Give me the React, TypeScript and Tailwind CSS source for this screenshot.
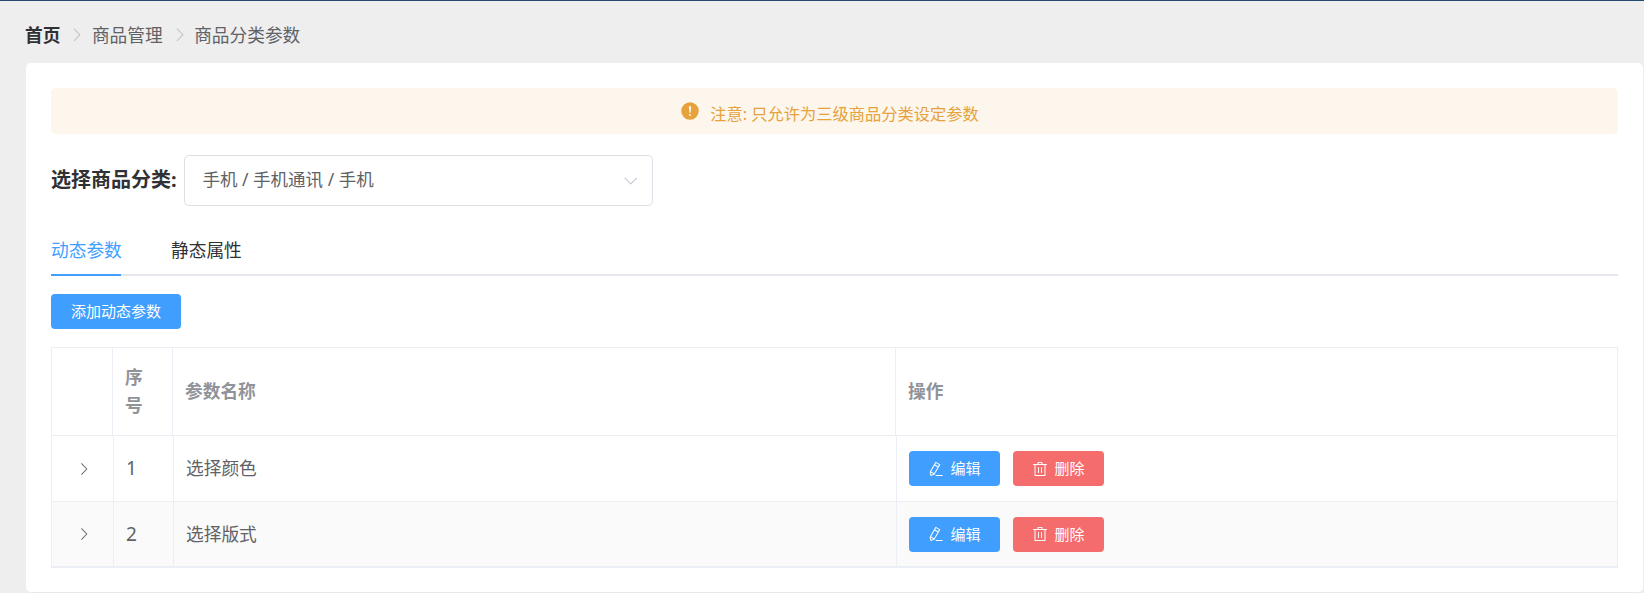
import React from 'react'

const font = { fontFamily: '"Noto Sans", "Noto Sans CJK SC", sans-serif' }

function ArrowRight({ className }: { className?: string }) {
  return (
    <svg viewBox="0 0 1024 1024" fill="currentColor" className={className}>
      <path d="M340.864 149.312a30.592 30.592 0 0 0 0 42.752L652.736 512 340.864 831.872a30.592 30.592 0 0 0 0 42.752 29.12 29.12 0 0 0 41.728 0L714.24 534.336a32 32 0 0 0 0-44.672L382.592 149.376a29.12 29.12 0 0 0-41.728 0z" />
    </svg>
  )
}

function ArrowDown({ className }: { className?: string }) {
  return (
    <svg viewBox="0 0 1024 1024" fill="currentColor" className={className}>
      <path d="M831.872 340.864 512 652.672 192.128 340.864a30.592 30.592 0 0 0-42.752 0 29.12 29.12 0 0 0 0 41.6L489.664 714.24a32 32 0 0 0 44.672 0l340.288-331.712a29.12 29.12 0 0 0 0-41.728 30.592 30.592 0 0 0-42.752 0z" />
    </svg>
  )
}

function WarningFilled({ className }: { className?: string }) {
  return (
    <svg viewBox="0 0 1024 1024" fill="currentColor" className={className}>
      <path d="M512 64a448 448 0 1 1 0 896 448 448 0 0 1 0-896zm0 192a58.432 58.432 0 0 0-58.24 63.744l23.36 256.384a35.072 35.072 0 0 0 69.76 0l23.296-256.384A58.432 58.432 0 0 0 512 256zm0 512a51.2 51.2 0 1 0 0-102.4 51.2 51.2 0 0 0 0 102.4z" />
    </svg>
  )
}

function EditPen({ className }: { className?: string }) {
  return (
    <svg viewBox="0 0 1024 1024" fill="currentColor" className={className}>
      <path d="m199.04 672.64 193.984 112 224-387.968-193.92-112-224 388.032zm-23.872 60.16 32.896 148.288 144.896-45.696L175.168 732.8zM455.04 229.248l193.92 112 56.704-98.112-193.984-112-56.64 98.112zM104.32 708.8l384-665.024 304.768 175.936L409.152 884.8h.064l-248.448 78.336L104.32 708.8zm384 254.272v-64h448v64h-448z" />
    </svg>
  )
}

function TrashIcon({ className }: { className?: string }) {
  return (
    <svg viewBox="0 0 1024 1024" fill="currentColor" className={className}>
      <path d="M160 256H96a32 32 0 0 1 0-64h256V95.936a32 32 0 0 1 32-32h256a32 32 0 0 1 32 32V192h256a32 32 0 1 1 0 64h-64v672a32 32 0 0 1-32 32H192a32 32 0 0 1-32-32V256zm448-64v-64H416v64h192zM224 896h576V256H224v640zm192-128a32 32 0 0 1-32-32V416a32 32 0 0 1 64 0v320a32 32 0 0 1-32 32zm192 0a32 32 0 0 1-32-32V416a32 32 0 0 1 64 0v320a32 32 0 0 1-32 32z" />
    </svg>
  )
}

function Breadcrumb() {
  return (
    <div className="flex items-center h-[22px] mt-[23px] mb-[17px] ml-[25px] text-[17.7px] leading-[22px] text-[#606266]">
      <span className="font-bold text-[#303133]">首页</span>
      <ArrowRight className="w-[17.5px] h-[17.5px] ml-[8px] mr-[6px] text-[#c0c4cc]" />
      <span>商品管理</span>
      <ArrowRight className="w-[17.5px] h-[17.5px] ml-[8px] mr-[6px] text-[#c0c4cc]" />
      <span>商品分类参数</span>
    </div>
  )
}

function ParamRow({ index, name, striped, last }: { index: number; name: string; striped?: boolean; last?: boolean }) {
  return (
    <div
      className={`grid grid-cols-[62px_60px_723px_1fr] h-[66px] text-[17.7px] text-[#606266] border-[#ebeef5] ${
        striped ? 'bg-[#fafafa]' : 'bg-white'
      } ${last ? 'border-b-2' : 'border-b'}`}
    >
      <div className="flex items-center justify-center pl-[2px] border-r border-[#ebeef5]">
        <ArrowRight className="w-[16px] h-[16px] text-[#606266]" />
      </div>
      <div className="flex items-center pl-[12px] text-[19px] border-r border-[#ebeef5]">{index}</div>
      <div className="flex items-center pl-[12px] border-r border-[#ebeef5]">{name}</div>
      <div className="flex items-center pl-[12px] gap-[13px]">
        <button className="flex items-center justify-center gap-[6px] w-[91px] h-[35px] rounded-[4px] bg-[#409eff] text-white text-[15px]">
          <EditPen className="w-[16px] h-[16px]" />
          <span>编辑</span>
        </button>
        <button className="flex items-center justify-center gap-[6px] w-[91px] h-[35px] rounded-[4px] bg-[#f56c6c] text-white text-[15px]">
          <TrashIcon className="w-[16px] h-[16px]" />
          <span>删除</span>
        </button>
      </div>
    </div>
  )
}

export default function App() {
  return (
    <div className="h-[593px] overflow-hidden bg-[#eeeeee] border-t border-[#23496f]" style={font}>
      <Breadcrumb />

      <div className="ml-[26px] mr-px h-[530px] rounded-[5px] bg-white border-b border-[#e8e8ec] px-[25px] pt-[25px]">
        <div className="flex items-center justify-center gap-[10px] h-[46px] pr-[10px] rounded-[5px] bg-[#fdf6ec] text-[16.25px] text-[#e6a23c]">
          <WarningFilled className="w-[20px] h-[20px]" />
          <span className="pt-[6px]">注意: 只允许为三级商品分类设定参数</span>
        </div>

        <div className="flex items-center mt-[21px] h-[51px]">
          <span className="w-[132.5px] pb-[2px] text-[20px] font-bold text-[#303133]">选择商品分类:</span>
          <div className="flex items-center justify-between w-[469px] h-[51px] pl-[18px] pr-[12px] rounded-[5px] border border-[#dcdfe6] text-[17.5px] text-[#606266]">
            <span className="pb-[2px]">手机 / 手机通讯 / 手机</span>
            <ArrowDown className="w-[17.5px] h-[17.5px] text-[#c0c4cc]" />
          </div>
        </div>

        <div className="flex items-end gap-[50px] mt-[20px] h-[50px] border-b-2 border-[#e4e7ed] text-[17.7px]">
          <div className="relative h-[50px] w-[70px] leading-[53px] text-[#409eff] whitespace-nowrap">
            动态参数
            <span className="absolute left-0 right-0 bottom-[-2px] h-[2px] bg-[#409eff]" />
          </div>
          <div className="h-[50px] leading-[53px] text-[#303133] whitespace-nowrap">静态属性</div>
        </div>

        <button className="block mt-[18px] w-[130px] h-[35px] rounded-[4px] bg-[#409eff] text-white text-[15px]">
          添加动态参数
        </button>

        <div className="mt-[18px] border-l border-r border-t border-[#ebeef5]">
          <div className="grid grid-cols-[61px_60px_723px_1fr] h-[88px] text-[17.7px] font-bold leading-[27.5px] text-[#909399] border-b border-[#ebeef5]">
            <div className="border-r border-[#ebeef5]" />
            <div className="flex items-center pl-[12px] pr-[15px] border-r border-[#ebeef5]">序号</div>
            <div className="flex items-center pl-[12px] border-r border-[#ebeef5]">参数名称</div>
            <div className="flex items-center pl-[12px]">操作</div>
          </div>
          <ParamRow index={1} name="选择颜色" />
          <ParamRow index={2} name="选择版式" striped last />
        </div>
      </div>
    </div>
  )
}
